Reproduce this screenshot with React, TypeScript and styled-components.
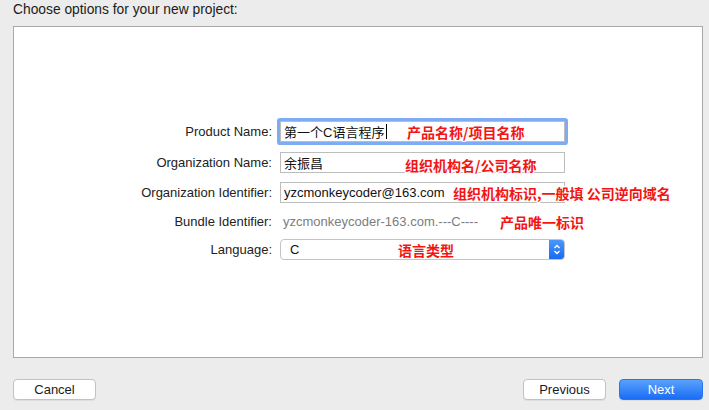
import React from 'react';
import styled, { createGlobalStyle } from 'styled-components';

const GlobalStyle = createGlobalStyle`
  html, body {
    margin: 0;
    padding: 0;
    background: #ececec;
  }
  body {
    font-family: "Liberation Sans", "Noto Sans CJK SC", Arial, sans-serif;
    font-size: 13px;
    color: #000;
  }
`

const Sheet = styled.div`
  width: 709px;
  height: 410px;
  box-sizing: border-box;
  padding: 0 6px 0 13px;
  display: flex;
  flex-direction: column;
  background: #ececec;
  overflow: hidden;
`

const Title = styled.div`
  height: 26px;
  line-height: 19px;
  font-size: 13.8px;
  color: #1b1b1b;
`

const Panel = styled.div`
  height: 332px;
  box-sizing: border-box;
  background: #fff;
  border: 1px solid #a9a9a9;
  padding-top: 94px;
`

const Form = styled.div`
  display: grid;
  grid-template-columns: 258px 285px;
  grid-template-rows: 21px 21px 21px 17px 21px;
  column-gap: 8px;
  row-gap: 9.5px;
`

const Label = styled.div`
  display: flex;
  align-items: center;
  justify-content: flex-end;
  color: #222;
  white-space: nowrap;
`

const Cell = styled.div`
  position: relative;
  display: flex;
  align-items: center;
`

const TextField = styled.div<{ $focused?: boolean }>`
  width: 100%;
  height: 21px;
  box-sizing: border-box;
  border: 1px solid #bdbdbd;
  background: #fff;
  padding-left: 3px;
  display: flex;
  align-items: center;
  font-family: "Liberation Sans", "Noto Sans CJK SC", sans-serif;
  color: #111;
  box-shadow: ${p => (p.$focused ? '0 0 0 3px #7fabf2' : 'none')};
  border-radius: ${p => (p.$focused ? '1px' : '0')};
`

const Caret = styled.span`
  display: inline-block;
  width: 1px;
  height: 15px;
  margin-left: 2px;
  background: #000;
`

const Plain = styled.div`
  padding-left: 3px;
  color: #7d7d7d;
  white-space: nowrap;
`

const Popup = styled.div`
  width: 100%;
  height: 21px;
  box-sizing: border-box;
  border: 1px solid #c4c4c4;
  border-radius: 4px;
  background: #fff;
  display: flex;
  align-items: center;
  overflow: hidden;
`

const PopupText = styled.span`
  flex: 1;
  padding-left: 9px;
  color: #111;
`

const Stepper = styled.div`
  width: 16px;
  height: 21px;
  margin: -1px -1px -1px 0;
  border-radius: 0 4px 4px 0;
  background: linear-gradient(#4b9bfb, #1767f4);
  display: flex;
  align-items: center;
  justify-content: center;
`

const Note = styled.span<{ $x: number; $dy?: number }>`
  position: absolute;
  left: ${p => p.$x}px;
  top: 50%;
  transform: translateY(calc(-50% + ${p => p.$dy ?? 0}px));
  font-family: "Noto Sans CJK SC", sans-serif;
  font-weight: 700;
  font-size: 14px;
  line-height: 16px;
  color: #f31414;
  white-space: nowrap;
  text-shadow:
    1px 0 0 #fff, -1px 0 0 #fff, 0 1px 0 #fff, 0 -1px 0 #fff,
    1px 1px 0 #fff, -1px -1px 0 #fff, 1px -1px 0 #fff, -1px 1px 0 #fff,
    0 0 2px #bbb;
`

const Footer = styled.div`
  margin-top: 21px;
  display: flex;
  align-items: center;
`

const Spacer = styled.div`
  flex: 1;
`

const Button = styled.button<{ $primary?: boolean }>`
  width: ${p => (p.$primary ? 84 : 83)}px;
  height: 21px;
  margin-left: ${p => (p.$primary ? 13 : 0)}px;
  box-sizing: border-box;
  border-radius: 4px;
  font-family: "Liberation Sans", Arial, sans-serif;
  font-size: 13px;
  padding: 0;
  color: ${p => (p.$primary ? '#fff' : '#1a1a1a')};
  border: 1px solid ${p => (p.$primary ? '#2a76f2' : '#c2c2c2')};
  background: ${p => (p.$primary ? 'linear-gradient(#5aa2fb, #1a6cf6)' : '#fff')};
  box-shadow: 0 1px 0 rgba(0, 0, 0, 0.06);
`

export default function App() {
  return (
    <Sheet>
      <GlobalStyle />
      <Title>Choose options for your new project:</Title>
      <Panel>
        <Form>
          <Label>Product Name:</Label>
          <Cell>
            <TextField $focused>
              第一个C语言程序<Caret />
            </TextField>
            <Note $x={127}>产品名称/项目名称</Note>
          </Cell>

          <Label>Organization Name:</Label>
          <Cell>
            <TextField>余振昌</TextField>
            <Note $x={125} $dy={3}>组织机构名/公司名称</Note>
          </Cell>

          <Label>Organization Identifier:</Label>
          <Cell>
            <TextField>yzcmonkeycoder@163.com</TextField>
            <Note $x={173}>组织机构标识,一般填 公司逆向域名</Note>
          </Cell>

          <Label>Bundle Identifier:</Label>
          <Cell>
            <Plain>yzcmonkeycoder-163.com.---C----</Plain>
            <Note $x={220} $dy={1}>产品唯一标识</Note>
          </Cell>

          <Label>Language:</Label>
          <Cell>
            <Popup>
              <PopupText>C</PopupText>
              <Stepper>
                <svg width="8" height="13" viewBox="0 0 8 13" fill="none" stroke="#fff" strokeWidth="1.4">
                  <path d="M1.5 5 L4 2.5 L6.5 5" />
                  <path d="M1.5 8 L4 10.5 L6.5 8" />
                </svg>
              </Stepper>
            </Popup>
            <Note $x={118}>语言类型</Note>
          </Cell>
        </Form>
      </Panel>
      <Footer>
        <Button>Cancel</Button>
        <Spacer />
        <Button>Previous</Button>
        <Button $primary>Next</Button>
      </Footer>
    </Sheet>
  );
}
